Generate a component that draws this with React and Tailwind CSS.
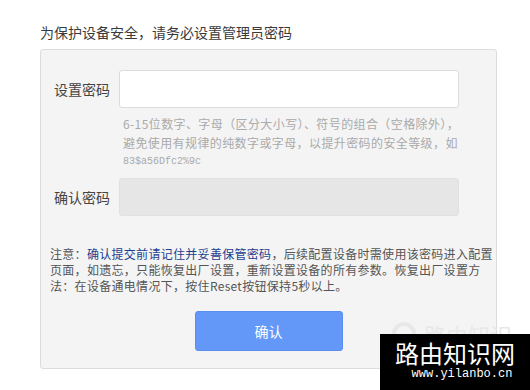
import React from 'react';

const cjk = { fontFamily: '"Noto Sans CJK SC", "Noto Sans", sans-serif' };

export default function App() {
  return (
    <div className="relative w-[530px] h-[390px] overflow-hidden bg-white pl-[40px] pt-[23px]" style={cjk}>
      {/* Title */}
      <p className="text-[14px] leading-[18px] text-[#3a3a3a]">为保护设备安全，请务必设置管理员密码</p>

      {/* Form panel */}
      <div className="mt-[8px] w-[457px] h-[320px] bg-[#f4f4f4] border border-[#dcdcdc] rounded-[3px] pt-[20px]">
        {/* Password */}
        <div className="flex items-center">
          <label className="w-[78px] pl-[13px] text-[14px] leading-[20px] text-[#444]">设置密码</label>
          <input
            type="password"
            className="w-[340px] h-[38px] bg-white border border-[#dcdcdc] rounded-[3px] outline-none"
          />
        </div>
        <div className="ml-[82px] mt-[6px] text-[12px] leading-[19px] tracking-[0.4px] text-[#aaa]">
          <p>6-15位数字、字母（区分大小写）、符号的组合（空格除外），</p>
          <p>避免使用有规律的纯数字或字母，以提升密码的安全等级，如</p>
          <p className="text-[10px] tracking-normal" style={{ fontFamily: '"Liberation Mono", monospace' }}>83$a56Dfc2%9c</p>
        </div>

        {/* Confirm */}
        <div className="flex items-center mt-[7px]">
          <label className="w-[78px] pl-[13px] text-[14px] leading-[20px] text-[#444]">确认密码</label>
          <div className="w-[340px] h-[38px] bg-[#e6e6e6] border border-[#e0e0e0] rounded-[3px]" />
        </div>

        {/* Note */}
        <div className="mt-[30px] pl-[9px] text-[12px] leading-[16px] tracking-[0.3px] text-[#555] whitespace-nowrap">
          <p>
            注意：<span className="text-[#1d3d8f]">确认提交前请记住并妥善保管密码</span>，后续配置设备时需使用该密码进入配置
          </p>
          <p>页面，如遗忘，只能恢复出厂设置，重新设置设备的所有参数。恢复出厂设置方</p>
          <p>法：在设备通电情况下，按住Reset按钮保持5秒以上。</p>
        </div>

        {/* Submit */}
        <div className="flex justify-center mt-[17px]">
          <button className="w-[148px] h-[40px] rounded-[3px] bg-[#6498f8] border border-[#5a8ef0] text-white text-[14px]">
            确认
          </button>
        </div>
      </div>

      {/* Faint watermark behind the box */}
      <div className="absolute left-[392px] top-[322px] flex items-center gap-[8px] text-[#e8e8e8] text-[22px] leading-[24px]">
        <div className="w-[24px] h-[24px] rounded-full border-[4px] border-[#e8e8e8]" />
        <span>路由知识</span>
      </div>

      {/* Watermark box */}
      <div className="absolute right-0 bottom-0 w-[150px] h-[56px] bg-black flex flex-col items-center">
        <span className="mt-[5px] text-[24px] leading-[28px] text-white" style={{ fontFamily: '"Noto Sans CJK SC", serif' }}>路由知识网</span>
        <span className="text-[12px] leading-[14px] text-white ml-[14px]" style={{ fontFamily: '"Liberation Mono", monospace' }}>www.yilanbo.cn</span>
      </div>
    </div>
  );
}
